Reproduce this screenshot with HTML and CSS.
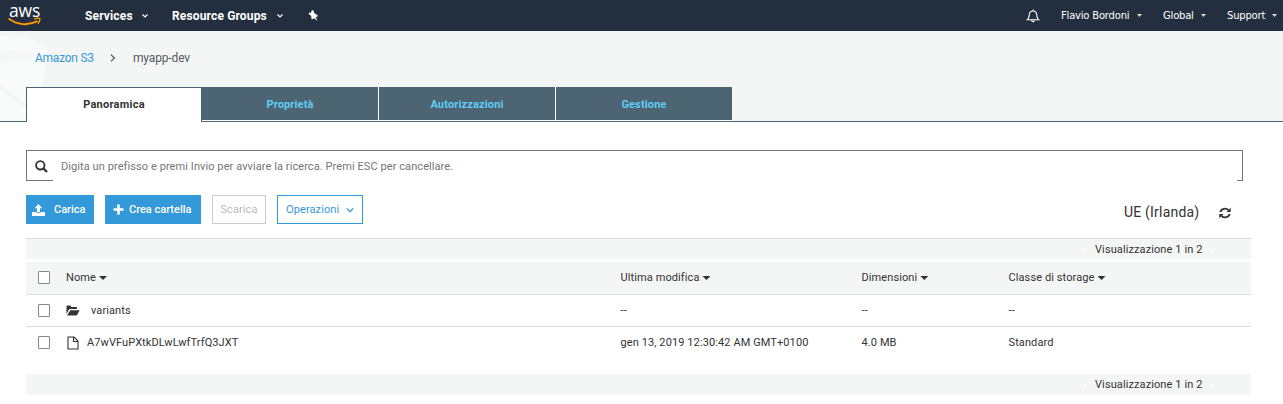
FILE: index.html
```html
<!DOCTYPE html>
<html lang="it">
<head>
<meta charset="utf-8">
<title>S3 Management Console</title>
<link rel="stylesheet" href="styles.css">
</head>
<body>
<header class="nav">
  <div class="logo">
    <span class="logo-text">aws</span>
    <svg class="smile" width="34" height="10" viewBox="0 0 34 10"><path d="M.5 1.500C9 8 20 9 29.500 4.200" fill="none" stroke="#f90" stroke-width="1.900"/><path d="M26 2.200C29 1 31.300 1 31.700 1.700S31.200 5 29.800 6.700" fill="none" stroke="#f90" stroke-width="1.400"/></svg>
  </div>
  <span class="nav-item services">Services</span>
  <svg class="chev c1" width="8" height="6" viewBox="0 0 8 6"><path d="M1.500 1.500 4 4 6.500 1.500"/></svg>
  <span class="nav-item groups">Resource Groups</span>
  <svg class="chev c2" width="8" height="6" viewBox="0 0 8 6"><path d="M1.500 1.500 4 4 6.500 1.500"/></svg>
  <svg class="pin" width="11" height="12" viewBox="0 0 11 12"><path d="M3.600.5 5.400.2 6 2.800 8.200 4.500 9.600 4.800 9.200 6.700 7.600 7.200 9.600 11 6.200 8.200 4.300 9.300 3.200 8.700 3.400 6.800 2.300 5 .6 4.300 1 3 3.300 2.300Z" fill="#fff"/></svg>
  <span class="spacer"></span>
  <svg class="bell" width="14" height="14" viewBox="0 0 14 14"><path d="M1.200 10.800C3.300 9 3 7.500 3.300 5.500 3.600 3.200 4.900 2 7 2S10.400 3.200 10.700 5.500C11 7.500 10.700 9 12.800 10.800ZM7 2V.5M5.500 11.500Q7 14 8.500 11.500" fill="none" stroke="#fff" stroke-width="1.100"/></svg>
  <span class="nav-small user">Flavio Bordoni</span>
  <i class="caret k1"></i>
  <span class="nav-small region">Global</span>
  <i class="caret k2"></i>
  <span class="nav-small support">Support</span>
  <i class="caret k3"></i>
</header>

<section class="top">
  <svg class="bucket" width="60" height="90" viewBox="0 0 60 90"><path d="M0 5C22 5 44 10 48 20L37 90H0Z" fill="#f9fbfb"/><path d="M0 32C16 32 30 30 39 25 30 21 16 19 0 19Z" fill="#f6f8f8"/><path d="M0 56 32 80" stroke="#f5f7f7" stroke-width="4"/></svg>
  <div class="crumbs">
    <a class="crumb-root">Amazon S3</a>
    <svg class="crumb-sep" width="6" height="8" viewBox="0 0 6 8"><path d="M1 .8 4.500 4 1 7.200"/></svg>
    <span class="crumb-name">myapp-dev</span>
  </div>
  <nav class="tabs">
    <div class="tab active">Panoramica</div>
    <div class="tab">Proprietà</div>
    <div class="tab">Autorizzazioni</div>
    <div class="tab">Gestione</div>
  </nav>
</section>

<main class="main">
  <div class="search">
    <svg width="13" height="13" viewBox="0 0 13 13"><circle cx="5.300" cy="5.300" r="4.200" fill="none" stroke="#333" stroke-width="1.900"/><path d="M8.400 8.400 12 12" stroke="#333" stroke-width="2.200"/></svg>
    <span class="placeholder">Digita un prefisso e premi Invio per avviare la ricerca. Premi ESC per cancellare.</span>
  </div>
  <div class="toolbar">
    <button class="btn primary upload"><svg width="13" height="12" viewBox="0 0 13 12"><path d="M6.500 0 10.300 4.200H8V8.200H5V4.200H2.700ZM0 8H4Q4.500 9.300 6.500 9.300T9 8H13V12H0Z" fill="#fff"/></svg><span>Carica</span></button>
    <button class="btn primary create"><svg width="11" height="11" viewBox="0 0 11 11"><path d="M5.500.5V10.500M.5 5.500H10.500" stroke="#fff" stroke-width="2.600"/></svg><span>Crea cartella</span></button>
    <button class="btn disabled"><span>Scarica</span></button>
    <button class="btn outline"><span>Operazioni</span><svg width="8" height="6" viewBox="0 0 8 6"><path d="M.8 1.500 4 4.700 7.200 1.500" fill="none" stroke="#3399d9" stroke-width="1.300"/></svg></button>
    <span class="spacer"></span>
    <span class="place">UE (Irlanda)</span>
    <svg class="refresh" width="12" height="12" viewBox="0 0 12 12"><path d="M1.300 5A4.700 4.300 0 0 1 9.500 3.200M10.700 7A4.700 4.300 0 0 1 2.500 8.800" fill="none" stroke="#333" stroke-width="1.800"/><path d="M11.700.8V5H7.500ZM.3 11.200V7H4.500Z" fill="#333"/></svg>
  </div>

  <div class="strip first"><i class="page-arrow">‹</i><span>Visualizzazione 1 in 2</span><i class="page-arrow">›</i></div>

  <div class="row head">
    <i class="check"></i>
    <div class="cell">Nome<i class="sort"></i></div>
    <div class="cell">Ultima modifica<i class="sort"></i></div>
    <div class="cell">Dimensioni<i class="sort"></i></div>
    <div class="cell">Classe di storage<i class="sort"></i></div>
  </div>
  <div class="row">
    <i class="check"></i>
    <div class="cell"><svg width="14" height="11" viewBox="0 0 14 11"><path d="M.5 9V1.200Q.5.500 1.200.5H4.300L5.500 2H10.300Q11 2 11 2.700V4H4.200Q3.300 4 2.800 4.800Z" fill="#333"/><path d="M4.300 5.200H13.600L11.200 9.800Q10.900 10.500 10 10.500H1Z" fill="#333"/></svg><span class="variants">variants</span></div>
    <div class="cell">--</div>
    <div class="cell">--</div>
    <div class="cell">--</div>
  </div>
  <div class="row file">
    <i class="check"></i>
    <div class="cell"><svg class="doc" width="12" height="14" viewBox="0 0 12 14"><path d="M1 1H7L11 5V13H1ZM6.500 1V5.500H11" fill="none" stroke="#333" stroke-width="1.100"/></svg><span class="key">A7wVFuPXtkDLwLwfTrfQ3JXT</span></div>
    <div class="cell">gen 13, 2019 12:30:42 AM GMT+0100</div>
    <div class="cell">4.0 MB</div>
    <div class="cell">Standard</div>
  </div>

  <div class="strip last"><i class="page-arrow">‹</i><span>Visualizzazione 1 in 2</span><i class="page-arrow">›</i></div>
</main>
</body>
</html>
```
FILE: styles.css
```css
* { box-sizing: border-box; }
body { margin: 0; width: 1283px; height: 404px; overflow: hidden; background: #fff; color: #333; font: 11px/16px Roboto, sans-serif; letter-spacing: .1px; }
i { font-style: normal; }
svg { flex: none; display: block; }
.spacer { flex: 1; }

.nav { display: flex; align-items: center; height: 31px; background: #232f3e; color: #fff; white-space: nowrap; }
.logo { width: 77px; height: 31px; padding: 3px 0 0 8px; }
.logo-text { display: block; height: 14px; padding-left: 1px; font: 500 17.5px/14px "Open Sans", sans-serif; letter-spacing: -.2px; }
.smile { margin-top: 0; }
.nav-item { font-weight: 700; font-size: 12px; letter-spacing: .15px; }
.services { width: 56px; margin-left: 8px; }
.groups { width: 104px; margin-left: 23px; }
.chev path { fill: none; stroke: #fff; stroke-width: 1.2; }
.pin { margin-left: 24px; }
.bell { margin-right: 21px; }
.nav-small { font: 10px/16px "DejaVu Sans", sans-serif; letter-spacing: -.2px; }
.user { width: 76px; }
.region { width: 38px; margin-left: 21px; }
.support { width: 45px; margin-left: 21px; }
.caret { width: 5px; height: 3px; background: #ddd; clip-path: polygon(0 0, 100% 0, 50% 100%); }
.k3 { margin-right: 6px; }

.top { position: relative; height: 91px; background: #f4f6f6; border-bottom: 1px solid #4d6472; }
.bucket { position: absolute; left: 0; top: 0; }
.crumbs { position: relative; display: flex; align-items: center; height: 56px; padding: 0 0 2px 35px; font-size: 12px; color: #545b64; letter-spacing: -.15px; }
.crumb-root { width: 75px; color: #3399d9; letter-spacing: -.25px; }
.crumb-sep { margin-right: 17px; }
.crumb-sep path { fill: none; stroke: #545b64; stroke-width: 1.2; }
.tabs { position: relative; display: flex; height: 35px; margin-left: 26px; }
.tab { width: 177px; height: 34px; border-right: 1px solid #fff; border-bottom: 1px solid #fff; background: #4d6472; color: #5fcdf5; font-weight: 700; line-height: 35px; text-align: center; letter-spacing: .15px; }
.tab:last-child { border-right: 0; width: 176px; }
.tab.active { width: 176px; height: 35px; border: 1px solid #4d6472; border-bottom: 0; background: #fff; color: #333; letter-spacing: .25px; line-height: 33px; }

.main { padding: 28px 32px 0 26px; }
.search { display: flex; align-items: center; width: 1217px; height: 31px; padding: 1px 0 0 8px; border: 1px solid #777; border-bottom: 0; background: linear-gradient(#777, #777) 0 100% / 26px 1px no-repeat, linear-gradient(#777, #777) 100% 100% / 5px 1px no-repeat; }
.placeholder { margin-left: 13px; color: #757575; letter-spacing: .08px; }
.toolbar { display: flex; align-items: center; height: 57px; }
.btn { display: flex; align-items: center; height: 29px; padding: 0; border: 1px solid #3399d9; background: #fff; color: #3399d9; font: 11px/16px Roboto, sans-serif; letter-spacing: .1px; white-space: nowrap; }
.primary { background: #3399d9; color: #fff; font-weight: 500; }
.upload { width: 68px; padding-left: 5px; gap: 9px; letter-spacing: 0; }
.create { width: 96px; margin-left: 11px; padding-left: 7px; gap: 5px; letter-spacing: 0; }
.disabled { width: 54px; margin-left: 11px; justify-content: center; border-color: #ccc; color: #bbb; }
.outline { width: 86px; margin-left: 11px; padding-left: 8px; gap: 7px; }
.place { width: 95px; margin-top: 5px; font-size: 14px; letter-spacing: .2px; }
.refresh { margin: 6px 20px 0 0; }

.strip { display: flex; align-items: center; justify-content: flex-end; height: 21px; padding-top: 1px; padding-right: 37px; background: #f4f6f6; }
.strip span { width: 108px; margin-left: 8px; margin-right: 7px; white-space: nowrap; }
.page-arrow { color: #fff; font-size: 14px; width: 4px; }
.first { border-top: 1px solid #ddd; margin-bottom: 3px; }
.last { margin-top: 15px; }
.row { display: grid; grid-template-columns: 40px 554.5px 241px 147px 1fr; align-items: center; height: 32px; border-bottom: 1px solid #ddd; }
.head { height: 33px; background: #f4f6f6; }
.file { border: 0; }
.check { width: 12px; height: 13px; margin: 0 0 1px 12px; border: 1px solid #888; border-radius: 1px; background: #fff; }
.cell { display: flex; align-items: center; white-space: nowrap; }
.sort { width: 8px; height: 4px; margin-left: 3px; background: #333; clip-path: polygon(0 0, 100% 0, 50% 100%); }
.variants { margin-left: 11px; }
.doc { margin-left: 1px; }
.key { margin-left: 8px; }
```
